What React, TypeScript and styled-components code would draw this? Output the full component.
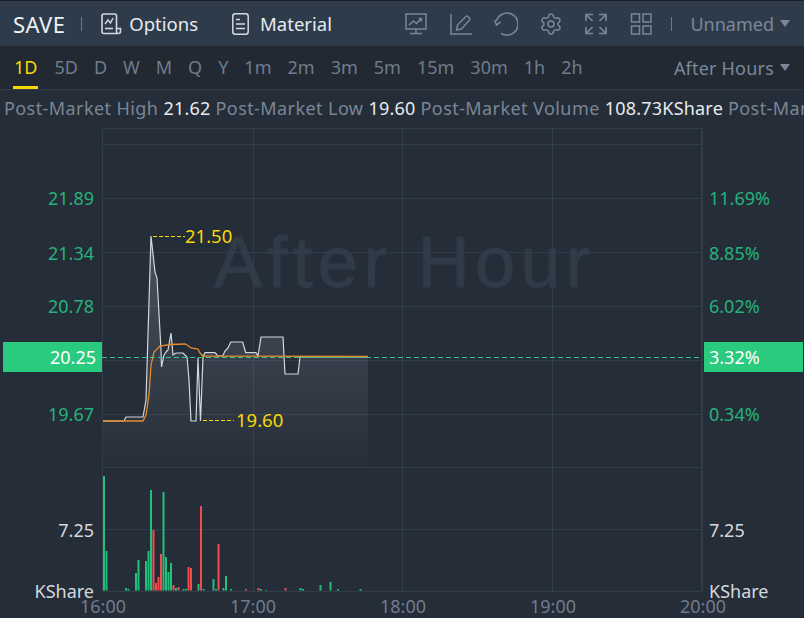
import styled, { createGlobalStyle } from 'styled-components';
import { Settings } from 'lucide-react';

const GlobalStyle = createGlobalStyle`
  html, body {
    margin: 0;
    padding: 0;
    background: #252d38;
  }
`;

const Page = styled.div`
  width: 804px;
  height: 618px;
  overflow: hidden;
  display: flex;
  flex-direction: column;
  background: #252d38;
  border-top: 1px solid #1a1f26;
  box-sizing: border-box;
  font-family: 'Noto Sans', 'Open Sans', sans-serif;
  font-size: 18px;
`;

const Header = styled.header`
  height: 45px;
  flex-shrink: 0;
  display: flex;
  align-items: center;
  padding: 0 14px 0 13px;
  background: #2e3b4b;
`;

const Symbol = styled.div`
  font-size: 22px;
  letter-spacing: 0.4px;
  color: #eef1f4;
`;

const Separator = styled.span<{ $m: string }>`
  width: 1px;
  height: 14px;
  background: #6d7a8a;
  margin: ${(p) => p.$m};
`;

const HeaderLink = styled.a<{ $gap: number }>`
  display: flex;
  align-items: center;
  gap: ${(p) => p.$gap}px;
  margin-right: 34px;
  font-size: 18.5px;
  color: #e6eaee;
`;

const Spacer = styled.div`
  flex: 1;
`;

const IconRow = styled.div`
  display: flex;
  align-items: center;
  gap: 21px;
  color: #77879a;
`;

const Dropdown = styled.div`
  display: flex;
  align-items: center;
  gap: 6px;
  color: #7b8899;
`;

const Caret = styled.span`
  width: 0;
  height: 0;
  border-left: 5px solid transparent;
  border-right: 5px solid transparent;
  border-top: 7px solid #7b8899;
`;

const TabBar = styled.nav`
  height: 44px;
  flex-shrink: 0;
  display: flex;
  align-items: stretch;
  padding: 0 14px 0 13px;
  background: #222933;
  border-bottom: 1px solid #323c49;
  box-sizing: border-box;
`;

const Tabs = styled.div`
  display: flex;
  gap: 16px;
  flex: 1;
`;

const Tab = styled.div<{ $active?: boolean }>`
  display: flex;
  align-items: center;
  padding: 0 ${(p) => (p.$active ? '1px' : '0')};
  color: ${(p) => (p.$active ? '#f7d900' : '#6f7c8c')};
  border-bottom: 3px solid ${(p) => (p.$active ? '#f7d900' : 'transparent')};
  border-top: 1px solid transparent;
`;

const AfterHours = styled(Dropdown)`
  letter-spacing: 0.2px;
`;

const InfoRow = styled.div`
  height: 30px;
  flex-shrink: 0;
  box-sizing: border-box;
  padding: 6px 0 0 4px;
  display: flex;
  align-items: center;
  gap: 5px;
  white-space: nowrap;
  overflow: hidden;
  letter-spacing: 0.42px;
  color: #7a8695;
`;

const InfoValue = styled.span`
  letter-spacing: 0.2px;
  color: #e8ebee;
`;

const Chart = styled.section`
  flex: 1;
  display: grid;
  grid-template-columns: 102px 600px 102px;
  grid-template-rows: 472px 1fr;
`;

const Axis = styled.div`
  position: relative;
`;

const AxisLabel = styled.span<{ $side: 'left' | 'right'; $y: number; $color: 'green' | 'light' }>`
  position: absolute;
  top: ${(p) => p.$y - 120}px;
  transform: translateY(-50%);
  ${(p) => (p.$side === 'left' ? 'right: 8px;' : 'left: 7px;')}
  color: ${(p) => (p.$color === 'green' ? '#26b27a' : '#d5d9de')};
  line-height: 1;
`;

const PriceTag = styled.span<{ $side: 'left' | 'right' }>`
  position: absolute;
  top: 222px;
  height: 30px;
  width: 99px;
  box-sizing: border-box;
  display: flex;
  align-items: center;
  background: #2aca7f;
  color: #fff;
  ${(p) =>
    p.$side === 'left'
      ? 'left: 3px; justify-content: flex-end; padding-right: 6px;'
      : 'left: 2px; padding-left: 5px;'}
`;

const Plot = styled.div`
  position: relative;
  width: 600px;
  height: 472px;
`;

const Watermark = styled.div`
  position: absolute;
  left: 5px;
  right: 0;
  top: 102px;
  text-align: center;
  font-family: 'Liberation Sans', Arial, sans-serif;
  font-size: 72px;
  line-height: 80px;
  letter-spacing: 5.3px;
  color: #303b48;
  -webkit-text-stroke: 1px #303b48;
`;

const PlotSvg = styled.svg`
  position: absolute;
  inset: 0;
  overflow: visible;
`;

const Callout = styled.span<{ $x: number; $y: number }>`
  position: absolute;
  left: ${(p) => p.$x - 102}px;
  top: ${(p) => p.$y - 120}px;
  transform: translateY(-50%);
  font-size: 18.5px;
  line-height: 1;
  color: #f7d900;
`;

const TimeAxis = styled.div`
  grid-column: 1 / -1;
  display: flex;
  padding-left: 28px;
  color: #6f7c8c;
`;

const TimeLabel = styled.span`
  width: 150px;
  flex-shrink: 0;
  text-align: center;
  line-height: 28px;
`;

const tabs = ['1D', '5D', 'D', 'W', 'M', 'Q', 'Y', '1m', '2m', '3m', '5m', '15m', '30m', '1h', '2h'];

const info: [string, string][] = [
  ['Post-Market High', '21.62'],
  ['Post-Market Low', '19.60'],
  ['Post-Market Volume', '108.73KShare'],
  ['Post-Market Turnover', '2.24M'],
];

const leftLabels: [string, number][] = [['21.89', 198], ['21.34', 253], ['20.78', 306], ['19.67', 414]];
const rightLabels: [string, number][] = [['11.69%', 198], ['8.85%', 253], ['6.02%', 306], ['0.34%', 414]];

const price = '103,421 124,421 126,417 143,417 146,400 151,236 155,272 157,278 161,350 161.5,367 164,355 166,352 168,350 171,333 173,355 176,353 183,353 187,357 189,380 191,421 196,421 198,358 200.5,421 203,357 205,352.7 215,352.7 218,356 222.7,356 225,351 228,348 230.7,342 242.7,342 245.7,352.7 256,352.7 258,356 261,337 283,337 285,374 298,374 300,357 368,357';

const average = '103,421 143,421 146,415 149,395 151,365 154,352 160,346 170,344.5 185,344 187,345 191,348 198,349 200,353 203,356 368,356.5';

// x, top of bar, up (green) or down (red)
const bars: [number, number, 'g' | 'r'][] = [
  [104, 476, 'g'], [106.5, 551, 'g'], [126, 588, 'g'], [128.5, 589, 'g'], [136, 573, 'g'], [138.5, 560, 'g'],
  [146, 561, 'g'], [148.5, 551, 'g'], [151, 490, 'g'], [153.5, 530, 'r'], [156, 583, 'r'], [158.5, 577, 'r'],
  [161, 554, 'r'], [163.5, 492, 'g'], [166, 557, 'g'], [168.5, 572, 'g'], [171, 563, 'g'], [173.5, 585, 'r'],
  [176, 588, 'g'], [178.5, 587, 'r'], [183.5, 589, 'g'], [186, 589, 'g'], [188.5, 567, 'r'], [191, 568, 'r'],
  [198.5, 584, 'g'], [201, 506, 'r'], [203.5, 589, 'g'], [213.5, 579, 'g'], [216, 589, 'g'], [218.5, 544, 'r'],
  [223.5, 588, 'g'], [226, 576, 'g'], [231, 589, 'g'], [246, 589, 'r'], [258.5, 588, 'r'], [261, 589, 'g'],
  [266, 590, 'g'], [285.5, 588, 'r'], [300.5, 588, 'g'], [303, 589, 'g'], [320.5, 585, 'g'], [330.5, 582, 'g'],
  [338, 589, 'g'], [360.5, 589, 'g'],
];

function OptionsIcon() {
  return (
    <svg width="21" height="22" viewBox="0 0 21 22" fill="none" stroke="#d4d9df" strokeWidth="1.6">
      <path d="M3 20.5h14.5a2 2 0 0 1-2-2V3a2 2 0 0 0-2-2H3a2 2 0 0 0-2 2v15.5a2 2 0 0 0 2 2Z" />
      <path d="M15.5 15.5h4v3a2 2 0 0 1-2 2" />
      <path d="M4 11l3-4 2.5 3L12 5" strokeWidth="1.4" />
      <path d="M4 15.5h8" />
    </svg>
  );
}

function MaterialIcon() {
  return (
    <svg width="17" height="22" viewBox="0 0 17 22" fill="none" stroke="#d4d9df" strokeWidth="1.5">
      <rect x="0.8" y="0.8" width="15.4" height="20.4" rx="2.5" />
      <path d="M4 6.5h4M4 11h9M4 15.5h9" />
    </svg>
  );
}

function MonitorIcon() {
  return (
    <svg width="24" height="22" viewBox="0 0 24 22" fill="none" stroke="currentColor" strokeWidth="1.5">
      <rect x="2" y="1" width="20" height="15" />
      <path d="M12 16v4M6 20.5h12" />
      <path d="M5 12l4.5-4 3 2.5 5-5M14.5 5.5h3v3" />
    </svg>
  );
}

function EditIcon() {
  return (
    <svg width="24" height="22" viewBox="0 0 24 22" fill="none" stroke="currentColor" strokeWidth="1.5">
      <path d="M2 1v20h21" />
      <path d="M7.5 17l1-5L17 3.5a1.5 1.5 0 0 1 2 0l1.5 1.5a1.5 1.5 0 0 1 0 2L12.5 16Z" />
    </svg>
  );
}

function RefreshIcon() {
  return (
    <svg width="24" height="24" viewBox="0 0 24 24" fill="none" stroke="currentColor" strokeWidth="1.6">
      <path d="M7 21.3A11 11 0 1 0 2.4 9" />
      <path d="M0.5 8l2 5 4-3" />
    </svg>
  );
}

function ExpandIcon() {
  return (
    <svg width="24" height="22" viewBox="0 0 24 22" fill="none" stroke="currentColor" strokeWidth="1.7">
      <path d="M2 8V1.5h7M2.5 2l6 6" />
      <path d="M22 8V1.5h-7M21.5 2l-6 6" />
      <path d="M2 14v6.500h7M2.5 20l6-6" />
      <path d="M22 14v6.500h-7M21.5 20l-6-6" />
    </svg>
  );
}

function GridIcon() {
  return (
    <svg width="24" height="22" viewBox="0 0 24 22" fill="none" stroke="currentColor" strokeWidth="1.5">
      <rect x="2.5" y="1" width="8" height="8" />
      <rect x="14" y="1" width="8" height="8" />
      <rect x="2.5" y="13" width="8" height="8" />
      <rect x="14" y="13" width="8" height="8" />
    </svg>
  );
}

function PriceChart() {
  const hLines = [144, 198, 252, 306, 360, 414, 467, 529, 591];
  const vLines = [253.5, 402.5, 552.5];
  const last = '368,357 368,468 103,468';
  return (
    <PlotSvg width="600" height="472" viewBox="102 120 600 472">
      <defs>
        <linearGradient id="area" x1="0" y1="0" x2="0" y2="1">
          <stop offset="0" stopColor="#8a95a5" stopOpacity="0.35" />
          <stop offset="1" stopColor="#8a95a5" stopOpacity="0.01" />
        </linearGradient>
      </defs>
      <g stroke="#323d4a" strokeWidth="1">
        <path d="M102.5 128.5H702" />
        {hLines.map((y) => (
          <path key={y} d={`M102 ${y + 0.5}H702`} />
        ))}
        {vLines.map((x) => (
          <path key={x} d={`M${x} 128V591`} />
        ))}
        <path d="M102.5 128V591" />
        <path d="M702 128V591" strokeWidth="2" />
      </g>
      <polygon points={`${price} ${last}`} fill="url(#area)" />
      <polyline points={price} fill="none" stroke="#d3d6da" strokeWidth="1.2" />
      <polyline points={average} fill="none" stroke="#e58a2e" strokeWidth="1.3" />
      <path d="M102 357.5H702" stroke="#3cc08e" strokeDasharray="5 3" />
      <path d="M153 236.5H185M203 420.5H234" stroke="#f7d900" strokeDasharray="4 2" />
      {bars.map(([x, top, kind]) => (
        <rect
          key={x}
          x={x - 1}
          y={top}
          width="2"
          height={590.5 - top}
          fill={kind === 'g' ? '#22c07c' : '#f04e4e'}
        />
      ))}
    </PlotSvg>
  );
}

export default function App() {
  return (
    <Page>
      <GlobalStyle />
      <Header>
        <Symbol>SAVE</Symbol>
        <Separator $m="0 19px 0 16px" />
        <HeaderLink $gap={7}>
          <OptionsIcon />
          Options
        </HeaderLink>
        <HeaderLink $gap={11}>
          <MaterialIcon />
          Material
        </HeaderLink>
        <Spacer />
        <IconRow>
          <MonitorIcon />
          <EditIcon />
          <RefreshIcon />
          <Settings size={24} strokeWidth={1.5} />
          <ExpandIcon />
          <GridIcon />
        </IconRow>
        <Separator $m="0 18px 0 18px" />
        <Dropdown>
          Unnamed
          <Caret />
        </Dropdown>
      </Header>
      <TabBar>
        <Tabs>
          {tabs.map((t, i) => (
            <Tab key={t} $active={i === 0}>
              {t}
            </Tab>
          ))}
        </Tabs>
        <AfterHours>
          After Hours
          <Caret />
        </AfterHours>
      </TabBar>
      <InfoRow>
        {info.map(([label, value]) => (
          <span key={label}>
            {label} <InfoValue>{value}</InfoValue>
          </span>
        ))}
      </InfoRow>
      <Chart>
        <Axis>
          {leftLabels.map(([text, y]) => (
            <AxisLabel key={text} $side="left" $y={y} $color="green">
              {text}
            </AxisLabel>
          ))}
          <PriceTag $side="left">20.25</PriceTag>
          <AxisLabel $side="left" $y={530} $color="light">
            7.25
          </AxisLabel>
          <AxisLabel $side="left" $y={591} $color="light">
            KShare
          </AxisLabel>
        </Axis>
        <Plot>
          <Watermark>After Hour</Watermark>
          <PriceChart />
          <Callout $x={185} $y={236}>
            21.50
          </Callout>
          <Callout $x={236} $y={420}>
            19.60
          </Callout>
        </Plot>
        <Axis>
          {rightLabels.map(([text, y]) => (
            <AxisLabel key={text} $side="right" $y={y} $color="green">
              {text}
            </AxisLabel>
          ))}
          <PriceTag $side="right">3.32%</PriceTag>
          <AxisLabel $side="right" $y={530} $color="light">
            7.25
          </AxisLabel>
          <AxisLabel $side="right" $y={591} $color="light">
            KShare
          </AxisLabel>
        </Axis>
        <TimeAxis>
          {['16:00', '17:00', '18:00', '19:00', '20:00'].map((t) => (
            <TimeLabel key={t}>{t}</TimeLabel>
          ))}
        </TimeAxis>
      </Chart>
    </Page>
  );
}
